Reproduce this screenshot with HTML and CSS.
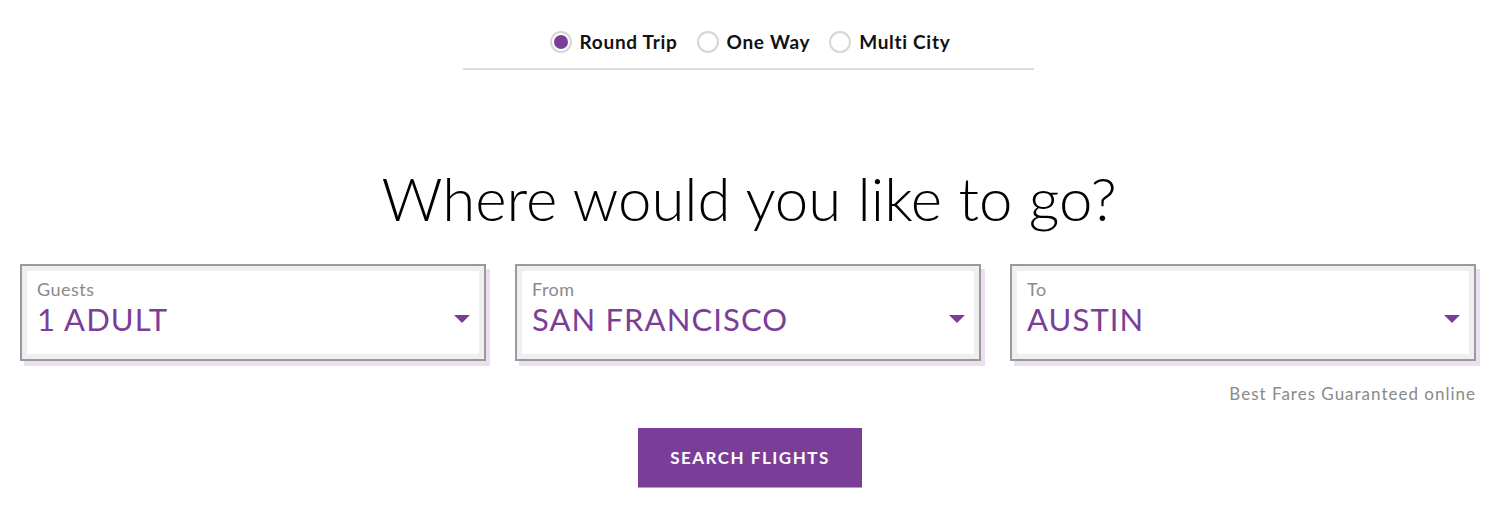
FILE: index.html
```html
<!DOCTYPE html>
<html>
<head>
<meta charset="utf-8">
<link rel="stylesheet" href="styles.css">
</head>
<body>
<div class="page">
  <div class="trip-type">
    <label class="radio"><span class="dot checked"></span><span class="radio-text">Round Trip</span></label>
    <label class="radio"><span class="dot"></span><span class="radio-text">One Way</span></label>
    <label class="radio"><span class="dot"></span><span class="radio-text">Multi City</span></label>
  </div>
  <div class="divider"></div>
  <h1 class="headline">Where would you like to go?</h1>
  <div class="fields">
    <div class="field">
      <div class="field-inner">
        <div class="field-text">
          <div class="field-label">Guests</div>
          <div class="field-value">1 ADULT</div>
        </div>
        <span class="caret"></span>
      </div>
    </div>
    <div class="field">
      <div class="field-inner">
        <div class="field-text">
          <div class="field-label">From</div>
          <div class="field-value">SAN FRANCISCO</div>
        </div>
        <span class="caret"></span>
      </div>
    </div>
    <div class="field">
      <div class="field-inner">
        <div class="field-text">
          <div class="field-label">To</div>
          <div class="field-value">AUSTIN</div>
        </div>
        <span class="caret"></span>
      </div>
    </div>
  </div>
  <div class="note">Best Fares Guaranteed online</div>
  <div class="actions">
    <button class="search-btn">SEARCH FLIGHTS</button>
  </div>
</div>
</body>
</html>
```
FILE: styles.css
```css
* { box-sizing: border-box; }
html, body { margin: 0; padding: 0; background: #fff; }
body { font-family: Lato, "Noto Sans", sans-serif; color: #000; }
.page { width: 1500px; height: 517px; overflow: hidden; padding: 0 24px 0 20px; }
.trip-type { display: flex; justify-content: center; gap: 19px; padding-top: 31px; height: 54px; align-items: flex-start; padding-left: 4px; }
.radio { display: flex; align-items: center; gap: 8px; }
.dot { width: 22px; height: 22px; border-radius: 50%; border: 2px solid #d6d6d6; background: #fff; display: inline-flex; align-items: center; justify-content: center; }
.dot.checked::after { content: ""; width: 14px; height: 14px; border-radius: 50%; background: #7b3e98; }
.radio-text { font-size: 19px; font-weight: 700; color: #111; line-height: 22px; letter-spacing: 0.7px; }
.divider { width: 571px; height: 2px; background: #dedede; margin: 14px auto 0 443px; }
.headline { margin: 95px 0 0; text-align: center; font-weight: 300; font-size: 60px; line-height: 66px; color: #000; letter-spacing: 0; padding-left: 2px; }
.fields { display: flex; gap: 29px; margin-top: 33px; }
.field { width: 466px; height: 97px; border: 2px solid #9a9a9a; background: #fff; box-shadow: 4px 5px 0 #ecdff4; }
.field-inner { height: 100%; border: 5px solid #efefef; padding: 7px 9px 0 10px; display: flex; justify-content: space-between; align-items: flex-start; }
.field-label { font-size: 18px; color: #8a8a8a; line-height: 22px; letter-spacing: 0.5px; }
.field-value { font-size: 31px; color: #7b3e98; line-height: 38px; letter-spacing: 1.1px; }
.caret { width: 0; height: 0; border-left: 8.5px solid transparent; border-right: 8.5px solid transparent; border-top: 8px solid #7b3e98; margin-top: 37px; }
.note { text-align: right; font-size: 17px; color: #8a8a8a; margin-top: 23px; line-height: 20px; letter-spacing: 1px; }
.actions { display: flex; justify-content: center; margin-top: 24px; padding-left: 4px; }
.search-btn { width: 224px; height: 60px; background: #7b3e98; border: 0; border-bottom: 1px solid #b99acc; color: #fff; font-family: Lato, "Noto Sans", sans-serif; font-weight: 700; font-size: 17px; letter-spacing: 1.5px; }
```
